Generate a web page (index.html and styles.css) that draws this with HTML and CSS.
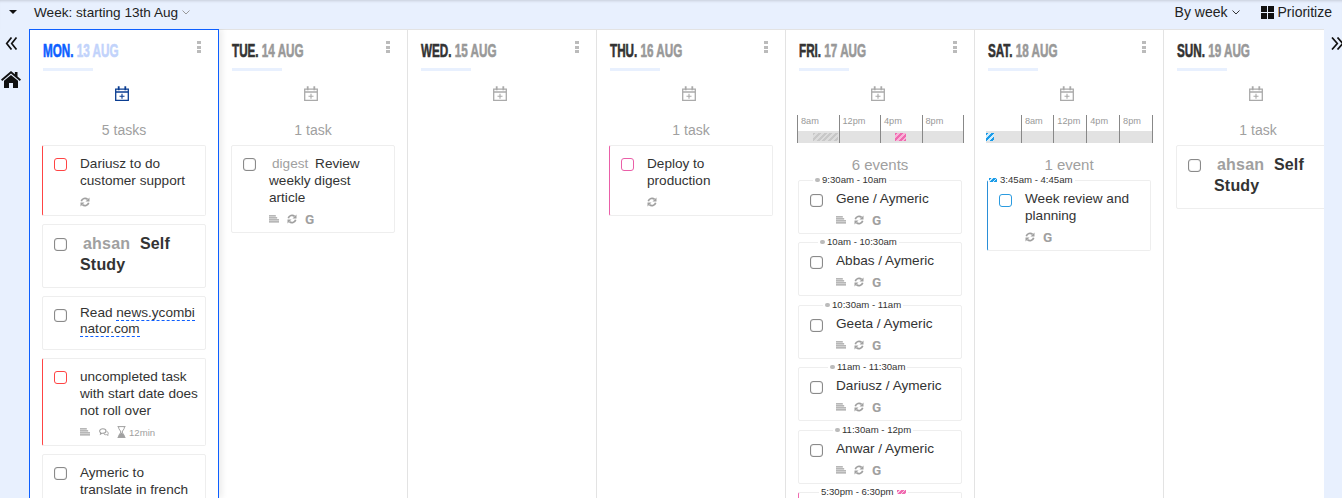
FILE: index.html
```html
<!doctype html>
<html>
	<head>
		<meta charset="utf-8">
		<title>Week</title>
		<link rel="stylesheet" href="styles.css">
	</head>
	<body>
		<svg class="defs" width="0" height="0">
			<symbol id="i-lines" viewBox="0 0 11 8"><path d="M0 .6h7.500M0 2.800h9M0 5h11M0 7.200h11" stroke="currentColor" stroke-width="1.200" fill="none"/></symbol>
			<symbol id="i-sync" viewBox="0 0 10 10"><path d="M1.300 4.200A3.800 3.800 0 0 1 7.600 2.400M8.700 5.800A3.800 3.800 0 0 1 2.400 7.600" stroke="currentColor" stroke-width="1.700" fill="none"/><path d="M9.500.4v4H5.500zM.5 9.600v-4h4z" fill="currentColor"/></symbol>
			<symbol id="i-chat" viewBox="0 0 11 9"><path d="M.7 3.400C.7 1.900 2.300.9 4.200.9s3.500 1 3.500 2.500-1.600 2.500-3.500 2.500H3L1.600 6.900l.2-1.500C1.100 5 .7 4.300.7 3.400z" stroke="currentColor" stroke-width="1.200" fill="#fff"/><path d="M8.500 4c1.300.4 2 1.200 1.600 2.300l-.4.500.3 1.400-1.700-.8c-1.400.3-2.600-.1-3.200-1" stroke="currentColor" fill="none"/></symbol>
			<symbol id="i-glass" viewBox="0 0 9 12"><path d="M.5.6h8M.5 11.400h8M1.500.6c0 3.200 2.300 3.900 2.300 5.400s-2.300 2.200-2.300 5.400M7.500.6c0 3.200-2.300 3.900-2.300 5.400s2.300 2.200 2.300 5.400" stroke="currentColor" fill="none"/><path d="M1.300 11.400c.3-2.400 1.900-3.400 3.200-4.800 1.300 1.400 2.900 2.400 3.200 4.800z" fill="currentColor"/></symbol>
			<symbol id="i-cal" viewBox="0 0 14 15"><path d="M.7 3.200h12.600v11.100H.7zM.7 6h12.600" stroke="currentColor" stroke-width="1.300" fill="none"/><path d="M3.700.3v4M10.300.3v4" stroke="currentColor" stroke-width="1.800"/><path d="M7 7.800v5M4.500 10.300h5" stroke="currentColor" stroke-width="1.100" fill="none"/></symbol>
			<symbol id="i-chev" viewBox="0 0 8 5"><path d="M.5.5 4 4 7.500.5" stroke="currentColor" fill="none"/></symbol>
			<symbol id="i-dleft" viewBox="0 0 13 13"><path d="M6.500.5 1.700 6.500l4.800 6M11.500.5 6.700 6.500l4.800 6" stroke="currentColor" stroke-width="1.700" fill="none"/></symbol>
			<symbol id="i-dright" viewBox="0 0 13 13"><path d="M1 .5l5.300 6-5.300 6M6.500.5l5.300 6-5.300 6" stroke="currentColor" stroke-width="1.700" fill="none"/></symbol>
		</svg>

		<header class="toolbar">
			<div class="toolbar-left">
				<span class="caret"></span>
				<span class="week">Week: starting 13th Aug</span>
				<svg class="chev"><use href="#i-chev"/></svg>
			</div>
			<div class="toolbar-right">
				<span>By week</span>
				<svg class="chev dark"><use href="#i-chev"/></svg>
				<span class="squares"><i></i><i></i><i></i><i></i></span>
				<span>Prioritize</span>
			</div>
		</header>

		<div class="app">
			<aside class="side-left">
				<svg class="dbl"><use href="#i-dleft"/></svg>
				<svg class="home" viewBox="0 0 20 17"><path d="M10 0 0 8.500l1.200 1.400L10 2.500l8.800 7.400L20 8.500l-3.500-3V1h-2.600v2.300z"/><path d="M10 4 3 9.800V17h5v-5h4v5h5V9.800z"/></svg>
			</aside>

			<main class="board">
				<section class="col today">
					<h2 class="day">Mon. <span>13 Aug</span></h2>
					<span class="kebab"></span>
					<div class="rule"></div>
					<svg class="add"><use href="#i-cal"/></svg>
					<div class="count">5 tasks</div>

					<article class="card red">
						<span class="check"></span>
						<div class="body">
							<p>Dariusz to do customer support</p>
							<div class="meta"><svg><use href="#i-sync"/></svg></div>
						</div>
					</article>
					<article class="card big">
						<span class="check"></span>
						<div class="body"><p><span class="tag">ahsan</span> Self Study</p></div>
					</article>
					<article class="card short">
						<span class="check"></span>
						<div class="body"><p>Read <a class="link">news.ycombinator.com</a></p></div>
					</article>
					<article class="card red">
						<span class="check"></span>
						<div class="body">
							<p>uncompleted task with start date does not roll over</p>
							<div class="meta">
								<svg><use href="#i-lines"/></svg>
								<svg class="wide"><use href="#i-chat"/></svg>
								<svg class="tall"><use href="#i-glass"/></svg>
								<small>12min</small>
							</div>
						</div>
					</article>
					<article class="card">
						<span class="check"></span>
						<div class="body"><p>Aymeric to translate in french</p></div>
					</article>
				</section>

				<section class="col">
					<h2 class="day">Tue. <span>14 Aug</span></h2>
					<span class="kebab"></span>
					<div class="rule"></div>
					<svg class="add"><use href="#i-cal"/></svg>
					<div class="count">1 task</div>
					<article class="card">
						<span class="check"></span>
						<div class="body">
							<p><span class="tag">digest</span> Review weekly digest article</p>
							<div class="meta">
								<svg><use href="#i-lines"/></svg>
								<svg><use href="#i-sync"/></svg>
								<b class="g">G</b>
							</div>
						</div>
					</article>
				</section>

				<section class="col">
					<h2 class="day">Wed. <span>15 Aug</span></h2>
					<span class="kebab"></span>
					<div class="rule"></div>
					<svg class="add"><use href="#i-cal"/></svg>
				</section>

				<section class="col">
					<h2 class="day">Thu. <span>16 Aug</span></h2>
					<span class="kebab"></span>
					<div class="rule"></div>
					<svg class="add"><use href="#i-cal"/></svg>
					<div class="count">1 task</div>
					<article class="card pink">
						<span class="check"></span>
						<div class="body">
							<p>Deploy to production</p>
							<div class="meta"><svg><use href="#i-sync"/></svg></div>
						</div>
					</article>
				</section>

				<section class="col">
					<h2 class="day">Fri. <span>17 Aug</span></h2>
					<span class="kebab"></span>
					<div class="rule"></div>
					<svg class="add"><use href="#i-cal"/></svg>
					<div class="timeline">
						<div class="hour" style="width:41.500px">8am</div>
						<div class="hour" style="width:41.500px">12pm</div>
						<div class="hour" style="width:41.500px">4pm</div>
						<div class="hour" style="width:41.500px">8pm</div>
						<i class="slot grey" style="left:16px;width:25px"></i>
						<i class="slot rose" style="left:98px;width:11px"></i>
					</div>
					<div class="count low">6 events</div>

					<article class="card event">
						<span class="when" style="left:14px"><i class="dot"></i>9:30am - 10am</span>
						<span class="check"></span>
						<div class="body">
							<p>Gene / Aymeric</p>
							<div class="meta"><svg><use href="#i-lines"/></svg><svg><use href="#i-sync"/></svg><b class="g">G</b></div>
						</div>
					</article>
					<article class="card event">
						<span class="when" style="left:19px"><i class="dot"></i>10am - 10:30am</span>
						<span class="check"></span>
						<div class="body">
							<p>Abbas / Aymeric</p>
							<div class="meta"><svg><use href="#i-lines"/></svg><svg><use href="#i-sync"/></svg><b class="g">G</b></div>
						</div>
					</article>
					<article class="card event">
						<span class="when" style="left:24px"><i class="dot"></i>10:30am - 11am</span>
						<span class="check"></span>
						<div class="body">
							<p>Geeta / Aymeric</p>
							<div class="meta"><svg><use href="#i-lines"/></svg><svg><use href="#i-sync"/></svg><b class="g">G</b></div>
						</div>
					</article>
					<article class="card event">
						<span class="when" style="left:29px"><i class="dot"></i>11am - 11:30am</span>
						<span class="check"></span>
						<div class="body">
							<p>Dariusz / Aymeric</p>
							<div class="meta"><svg><use href="#i-lines"/></svg><svg><use href="#i-sync"/></svg><b class="g">G</b></div>
						</div>
					</article>
					<article class="card event">
						<span class="when" style="left:34px"><i class="dot"></i>11:30am - 12pm</span>
						<span class="check"></span>
						<div class="body">
							<p>Anwar / Aymeric</p>
							<div class="meta"><svg><use href="#i-lines"/></svg><svg><use href="#i-sync"/></svg><b class="g">G</b></div>
						</div>
					</article>
					<article class="card event rose-edge">
						<span class="when" style="left:20px">5:30pm - 6:30pm<i class="tail"></i></span>
					</article>
				</section>

				<section class="col">
					<h2 class="day">Sat. <span>18 Aug</span></h2>
					<span class="kebab"></span>
					<div class="rule"></div>
					<svg class="add"><use href="#i-cal"/></svg>
					<div class="timeline">
						<div class="hour first" style="width:35px"></div>
						<div class="hour" style="width:32.500px">8am</div>
						<div class="hour" style="width:33px">12pm</div>
						<div class="hour" style="width:33px">4pm</div>
						<div class="hour" style="width:33px">8pm</div>
						<i class="slot blue" style="left:0;width:8px"></i>
					</div>
					<div class="count low">1 event</div>
					<article class="card event blue-edge">
						<span class="when flush"><i class="tail sky"></i>3:45am - 4:45am</span>
						<span class="check"></span>
						<div class="body">
							<p>Week review and planning</p>
							<div class="meta"><svg><use href="#i-sync"/></svg><b class="g">G</b></div>
						</div>
					</article>
				</section>

				<section class="col">
					<h2 class="day">Sun. <span>19 Aug</span></h2>
					<div class="rule"></div>
					<svg class="add"><use href="#i-cal"/></svg>
					<div class="count">1 task</div>
					<article class="card big">
						<span class="check"></span>
						<div class="body"><p><span class="tag">ahsan</span> Self Study</p></div>
					</article>
				</section>
			</main>

			<aside class="side-right">
				<svg class="dbl"><use href="#i-dright"/></svg>
			</aside>
		</div>
	</body>
</html>
```

FILE: styles.css
```css
*{padding:0px;margin:0px;box-sizing:border-box;}
html,body{
	height:100%;
	overflow:hidden;
}
body{
	background:#e8f0fe;
	font-family:"Liberation Sans",Arial,sans-serif;
	font-size:14px;
	color:#333;
	display:flex;
	flex-direction:column;
}
.defs{position:absolute;}

.toolbar{
	height:29px;
	flex:none;
	display:flex;
	justify-content:space-between;
	align-items:center;
	padding:0 10px 5px 9px;
	box-shadow:inset 0 3px 3px -2px rgba(0,0,0,0.15);
	color:#222;
	font-size:14px;
}
.toolbar-left,.toolbar-right{
	display:flex;
	align-items:center;
}
.week{font-size:13.600px;}
.caret{
	width:0;
	height:0;
	border-left:4px solid transparent;
	border-right:4px solid transparent;
	border-top:4px solid #111;
	margin-right:17px;
}
.chev{
	width:8px;
	height:5px;
	margin-left:4px;
	color:#999;
}
.chev.dark{color:#333;}
.squares{
	display:grid;
	grid-template-columns:6px 6px;
	grid-template-rows:6px 6px;
	gap:1px;
	margin:0 4px 0 21px;
}
.squares i{background:#111;}

.app{
	flex:1;
	min-height:0;
	display:flex;
}
.side-left{
	width:29px;
	flex:none;
	display:flex;
	flex-direction:column;
	align-items:flex-start;
	padding:8px 0 0 5px;
}
.side-right{
	width:18px;
	flex:none;
	padding:8px 0 0 7px;
	overflow:hidden;
}
.dbl{
	width:13px;
	height:13px;
	color:#111;
	display:block;
}
.home{
	width:20px;
	height:17px;
	margin:21px 0 0 -4px;
	fill:#111;
}

.board{
	flex:1;
	min-width:0;
	display:flex;
	overflow:hidden;
}
.col{
	width:189px;
	flex:none;
	position:relative;
	background:white;
	border-top:1px solid #e3e3e3;
	border-right:1px solid #e3e3e3;
	padding:0 12px;
}
.col.today{
	width:190px;
	border:1px solid #0d5fff;
	border-bottom:none;
	box-shadow:3px 0 6px rgba(0,0,0,0.08);
	z-index:1;
}
.day{
	font-weight:bold;
	font-size:19px;
	line-height:20px;
	height:20px;
	margin:11px 0 0 1px;
	text-transform:uppercase;
	color:#333;
	white-space:nowrap;
	transform:scaleX(.615);
	transform-origin:left center;
	-webkit-text-stroke:.6px currentColor;
}
.day span{color:#999;}
.today .day{color:#0d5fff;}
.today .day span{color:#c2d3fb;}
.kebab{
	position:absolute;
	top:11px;
	right:17px;
	width:4px;
	height:12px;
	background:repeating-linear-gradient(#bbb 0 3px,transparent 3px 4.500px);
}
.rule{
	width:50px;
	height:3px;
	margin:7px 0 0 1px;
	background:#e8f0fe;
}
.add{
	display:block;
	width:14px;
	height:15px;
	margin:15px 0 0 73px;
	color:#aaa;
}
.today .add{color:#0a3d91;}
.count{
	text-align:center;
	line-height:17px;
	color:#a0a0a0;
	margin:21px 0 6px;
}
.count.low{
	font-size:15px;
	margin:13px 0 7px;
}

.timeline{
	position:relative;
	display:flex;
	width:167px;
	height:28px;
	margin:14px 0 0 -1px;
	background:linear-gradient(transparent 16px,#e2e2e2 16px);
	border-right:1px solid #888;
}
.hour{
	border-left:1px solid #888;
	font-size:9.200px;
	line-height:12px;
	padding-left:3px;
	color:#999;
}
.hour.first{border-left:none;}
.slot{
	position:absolute;
	top:18px;
	height:8px;
}
.slot.grey{background:repeating-linear-gradient(135deg,#c8c8c8 0 2px,#dcdcdc 2px 4px);}
.slot.rose{background:repeating-linear-gradient(135deg,#f06ab0 0 2px,#f8b4d8 2px 4px);}
.slot.blue{background:repeating-linear-gradient(135deg,#1a9be8 0 2px,#d0ecfc 2px 4px);}

.card{
	position:relative;
	display:flex;
	width:164px;
	background:white;
	border:1px solid #eee;
	border-radius:2px;
	padding:9px 7px 4px 11px;
	margin-bottom:8px;
}
.card.event{
	margin-bottom:8.400px;
}
.card.red{border-left-color:#f44;}
.card.pink{border-left-color:#ea5fa8;}
.card.rose-edge{border-left-color:#f06ab0;height:54px;}
.card.blue-edge{border-left-color:#2a8fd8;}
.card.short{padding:8px 7px 12px 11px;}
.card.big{padding:9px 7px 12px 11px;}
.check{
	flex:none;
	width:13px;
	height:13px;
	margin:3px 13px 0 0;
	border:1px solid #8a8a8a;
	border-radius:3px;
	box-shadow:inset 0 0 1px #8a8a8a;
}
.event .check{margin-top:4px;}
.short .check,.big .check{margin-top:4px;}
.red .check{border-color:#f44;box-shadow:none;}
.pink .check{border-color:#ea5fa8;box-shadow:none;}
.blue-edge .check{border-color:#2a9be0;box-shadow:none;}
.body{
	flex:1;
	min-width:0;
	font-size:13.600px;
}
.body p{line-height:17px;}
.short .body p{line-height:16px;}
.big .body p{
	font-size:16px;
	font-weight:bold;
	line-height:20.500px;
	letter-spacing:.2px;
}
.tag{
	color:#a0a0a0;
	margin:0 3px 0 3px;
}
.big .tag{margin-right:5px;}
.link{
	border-bottom:1px dashed #0d5fff;
	word-break:break-all;
}
.meta{
	display:flex;
	align-items:center;
	gap:8px;
	height:16px;
	margin-top:5px;
	margin-bottom:1px;
	color:#a0a0a0;
}
.meta svg{
	width:10px;
	height:10px;
}
.meta svg.wide{margin-left:1px;}
.meta svg.tall{
	width:9px;
	height:12px;
}
.meta small{
	font-size:9.600px;
	margin-left:-5px;
}
.g{
	font-family:Roboto,"Liberation Sans",sans-serif;
	font-weight:700;
	font-size:13.500px;
	line-height:10px;
	width:10px;
}
.when{
	position:absolute;
	top:-7px;
	background:white;
	padding:0 2px;
	font-size:9.600px;
	line-height:12px;
	white-space:nowrap;
	color:#333;
	display:flex;
	align-items:center;
}
.when.flush{left:0;padding-left:1px;}
.dot{
	width:5px;
	height:4px;
	margin-right:2px;
	border-radius:2px;
	background:#bbb;
}
.tail{
	width:9px;
	height:4px;
	margin-left:3px;
	background:repeating-linear-gradient(135deg,#f06ab0 0 2px,#fbd0e6 2px 3px);
}
.tail.sky{
	width:8px;
	margin:0 3px 0 0;
	background:repeating-linear-gradient(135deg,#1a9be8 0 2px,#d0ecfc 2px 3px);
}
```
